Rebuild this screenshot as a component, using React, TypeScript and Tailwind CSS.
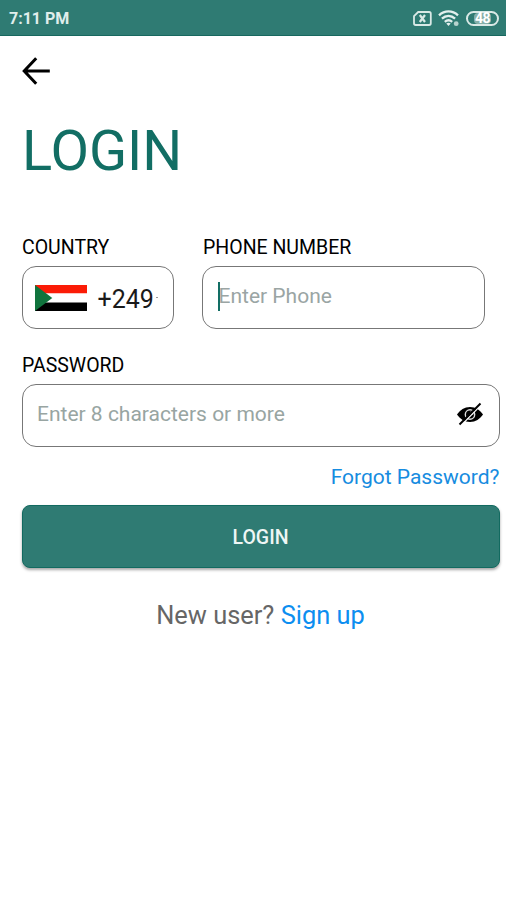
import React from 'react';

const SimIcon = () => (
  <svg width="19" height="15" viewBox="0 0 19 15" fill="none" stroke="#d9e9e6" strokeWidth="1.8">
    <path d="M5.2 1h10.9a1.7 1.7 0 0 1 1.7 1.7v9.6a1.7 1.7 0 0 1-1.7 1.7H2.7A1.7 1.7 0 0 1 1 12.3V5.2z" />
    <path d="M6.8 4l5.2 7M12 4l-5.2 7" strokeWidth="2.2" />
  </svg>
);

const WifiIcon = () => (
  <svg width="22" height="17" viewBox="0 0 22 17" fill="none" stroke="#e2efed" strokeWidth="2.3">
    <path d="M1 5.3C6.6.1 14.4.1 20 5.3" />
    <path d="M3.9 8.7c4-3.600 9.200-3.600 13.200 0" />
    <path d="M6.8 11.9c2.200-1.900 5.200-1.900 7.400 0" />
    <path d="M8.300 13.400l2.200 2.600 2.200-2.600c-1.300-1-3.100-1-4.400 0z" fill="#e2efed" stroke="none" />
    <circle cx="18.2" cy="13.7" r="2.4" fill="#b7d3ce" stroke="none" />
  </svg>
);

const BackArrow = () => (
  <svg width="30" height="28" viewBox="0 0 30 28" fill="none" stroke="#000" strokeWidth="3">
    <path d="M14.2 1.3L2.2 14l12 12.7M2 14h25.8" />
  </svg>
);

const SudanFlag = () => (
  <svg width="52" height="26" viewBox="0 0 52 26" className="shrink-0">
    <rect width="52" height="8.5" fill="#fb1b06" />
    <rect y="8.5" width="52" height="9" fill="#fff" />
    <rect y="17.5" width="52" height="8.5" fill="#000" />
    <path d="M0 0l17.3 13L0 26z" fill="#10743d" />
  </svg>
);

const EyeOffIcon = () => (
  <svg width="28" height="24" viewBox="0 0 28 24" fill="none">
    <path d="M1 12.5C4 8 8.500 5 14 5s10 3 13 7.500c-3 4.500-7.500 7.500-13 7.500S4 17 1 12.500z" fill="#000" />
    <circle cx="14" cy="12.5" r="4.7" stroke="#ddd" strokeWidth="1.4" />
    <path d="M14.500 10c1.400.2 2.200 1.100 2.300 2.500" stroke="#ddd" strokeWidth="1.4" />
    <path d="M5 23.500L25 3" stroke="#fff" strokeWidth="1.3" />
    <path d="M3.500 22.500L24.500 1.500" stroke="#000" strokeWidth="1.9" />
  </svg>
);

const StatusBar = () => (
  <div className="flex h-9 items-center justify-between border-b border-[#17685f] bg-[#2f7b73] pl-[9px] pr-[7px]">
    <span className="pt-[3px] text-[16px] font-bold leading-5 text-[#e0eeec]">7:11 PM</span>
    <div className="flex items-center gap-[6px] pt-px">
      <SimIcon />
      <WifiIcon />
      <div className="flex h-[15px] w-[33px] items-center justify-center rounded-full border-2 border-[#d9e9e6]">
        <span className="flex h-[11px] items-center rounded-sm bg-[#86b0aa] px-px text-[14px] font-bold leading-none tracking-[-0.5px] text-white">48</span>
      </div>
    </div>
  </div>
);

export default function App() {
  return (
    <div className="min-h-[900px] w-full bg-white font-['Roboto',sans-serif] text-black">
      <StatusBar />

      <main className="pl-[21.5px] pr-[6.5px]">
        <button className="mt-[21px] block" aria-label="Back">
          <BackArrow />
        </button>

        <h1 className="mt-[33px] pl-[0.5px] text-[56px] leading-[66px] text-[#126e64]">LOGIN</h1>

        <div className="mt-[52px] flex gap-[28px]">
          <div className="w-[152.5px]">
            <div className="pl-[0.5px] text-[19.5px] leading-6">COUNTRY</div>
            <div className="mt-[6px] flex h-[63px] items-center rounded-[14px] border border-[#777] pl-[12px]">
              <SudanFlag />
              <span className="ml-[11px] pt-[4px] text-[25px] leading-7 text-[#1a1a1a]">+249</span>
              <span className="ml-[2px] h-px w-[2px] bg-[#999]" />
            </div>
          </div>
          <div className="w-[283px]">
            <div className="pl-px text-[19.5px] leading-6">PHONE NUMBER</div>
            <div className="mt-[6px] flex h-[63px] items-center rounded-[14px] border border-[#777] pl-[15px]">
              <span className="relative pb-[3px] pl-[0.5px] text-[21px] leading-7 text-[#9aa5a4]">
                Enter Phone
                <span className="absolute left-0 top-0 h-[29px] w-[2px] bg-[#126e64]" />
              </span>
            </div>
          </div>
        </div>

        <div className="mt-[25px] pl-[0.5px] text-[19.5px] leading-6">PASSWORD</div>
        <div className="mt-[6px] flex h-[63px] items-center justify-between rounded-[14px] border border-[#777] pl-[14.5px] pr-[15px]">
          <span className="pb-[3px] text-[21px] leading-7 text-[#98a5a2]">Enter 8 characters or more</span>
          <div className="pb-1">
            <EyeOffIcon />
          </div>
        </div>

        <div className="mt-[17px] text-right text-[21px] leading-[26px] text-[#168ce0]">Forgot Password?</div>

        <button className="mt-[15px] block h-[63px] w-full rounded-[8px] border border-[#126a60] bg-[#2f7b73] pt-[2px] text-[19.5px] font-medium text-[#eef6f5] shadow-[0_2px_3px_rgba(0,0,0,0.35)]">
          LOGIN
        </button>

        <p className="mt-[31px] text-center text-[25.4px] leading-8 text-[#666]">
          New user? <span className="text-[#0c8ef0]">Sign up</span>
        </p>
      </main>
    </div>
  );
}
